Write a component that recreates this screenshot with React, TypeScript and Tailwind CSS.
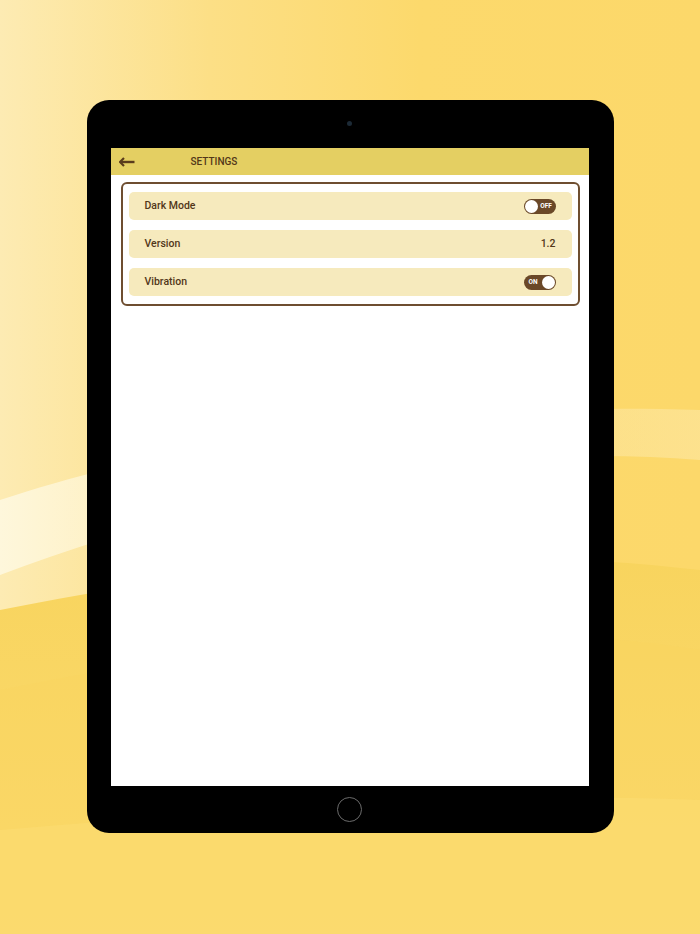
import { useState } from "react";

function Toggle({ on, onClick }: { on: boolean; onClick: () => void }) {
  return (
    <button
      onClick={onClick}
      className={`flex h-[15px] w-[32px] items-center rounded-full bg-[#6a4828] px-[1px] ${on ? "flex-row-reverse" : "flex-row"}`}
    >
      <span className="h-[13px] w-[13px] rounded-full bg-white" />
      <span className="flex-1 text-center text-[6.5px] font-bold leading-none text-white">
        {on ? "ON" : "OFF"}
      </span>
    </button>
  );
}

function Row({ label, children }: { label: string; children: React.ReactNode }) {
  return (
    <div className="flex h-[28px] items-center justify-between rounded-[5px] bg-[#f6eabd] pl-[16px] pr-[16px]">
      <span className="text-[10.5px] font-medium text-[#523719]">{label}</span>
      {children}
    </div>
  );
}

export default function App() {
  const [dark, setDark] = useState(false);
  const [vibe, setVibe] = useState(true);

  return (
    <div
      className="relative h-[934px] w-[700px] overflow-hidden bg-[#fcd96b]"
      style={{ fontFamily: "Roboto, 'Liberation Sans', sans-serif" }}
    >
      <svg className="absolute inset-0" width="700" height="934" viewBox="0 0 700 934">
        <defs>
          <linearGradient id="bg" x1="0" y1="0" x2="1" y2="0">
            <stop offset="0" stopColor="#fdebb3" />
            <stop offset="0.3" stopColor="#fcdf86" />
            <stop offset="0.6" stopColor="#fcd96c" />
            <stop offset="1" stopColor="#fcd86a" />
          </linearGradient>
          <linearGradient id="band" x1="0" y1="0" x2="1" y2="0">
            <stop offset="0" stopColor="#fffbe9" stopOpacity="0.75" />
            <stop offset="0.5" stopColor="#fef3cf" stopOpacity="0.2" />
            <stop offset="1" stopColor="#fef3cf" stopOpacity="0.35" />
          </linearGradient>
          <linearGradient id="low" x1="0" y1="0" x2="0" y2="1">
            <stop offset="0" stopColor="#f8d45e" />
            <stop offset="1" stopColor="#fbdb70" />
          </linearGradient>
        </defs>
        <rect width="700" height="934" fill="url(#bg)" />
        <path d="M0 500 C150 450 400 400 700 410 L700 460 C450 440 200 500 0 575 Z" fill="url(#band)" />
        <path d="M0 610 C200 570 450 540 700 570 L700 934 L0 934 Z" fill="url(#low)" />
        <path d="M0 690 C200 650 450 610 700 650 L700 934 L0 934 Z" fill="#f9d460" opacity="0.4" />
        <path d="M0 830 C250 810 450 790 700 800 L700 934 L0 934 Z" fill="#fbdc72" opacity="0.6" />
      </svg>

      <div className="relative flex justify-center pt-[100px]">
        <div className="flex h-[733px] w-[527px] flex-col items-center rounded-[22px] bg-black pl-[24px] pr-[25px]">
          <div className="flex h-[48px] items-center">
            <span className="mt-[-1px] h-[5px] w-[5px] rounded-full bg-[#1c2a36]" />
          </div>
          <div className="flex h-[638px] w-full flex-col bg-white">
            <div className="flex h-[27px] items-center bg-[#e4cf62]">
              <svg width="16" height="10" viewBox="0 0 16 10" className="ml-[8px]">
                <path d="M5 1 L1 5 L5 9" fill="none" stroke="#5a3c1c" strokeWidth="2.2" strokeLinejoin="miter" />
                <path d="M1.5 5 H15.5" stroke="#5a3c1c" strokeWidth="2.4" />
              </svg>
              <span className="ml-[56px] text-[10px] font-medium text-[#523719]">SETTINGS</span>
            </div>
            <div className="ml-[10px] mr-[9px] mt-[7px] flex flex-col gap-[10px] rounded-[6px] border-2 border-[#6e4e30] px-[6px] pb-[8px] pt-[8px]">
              <Row label="Dark Mode">
                <Toggle on={dark} onClick={() => setDark(!dark)} />
              </Row>
              <Row label="Version">
                <span className="text-[10.5px] font-medium text-[#523719]">1.2</span>
              </Row>
              <Row label="Vibration">
                <Toggle on={vibe} onClick={() => setVibe(!vibe)} />
              </Row>
            </div>
          </div>
          <div className="flex flex-1 items-center justify-center">
            <span className="h-[25px] w-[25px] rounded-full border-[1.5px] border-[#6b6b6b]" />
          </div>
        </div>
      </div>
    </div>
  );
}
